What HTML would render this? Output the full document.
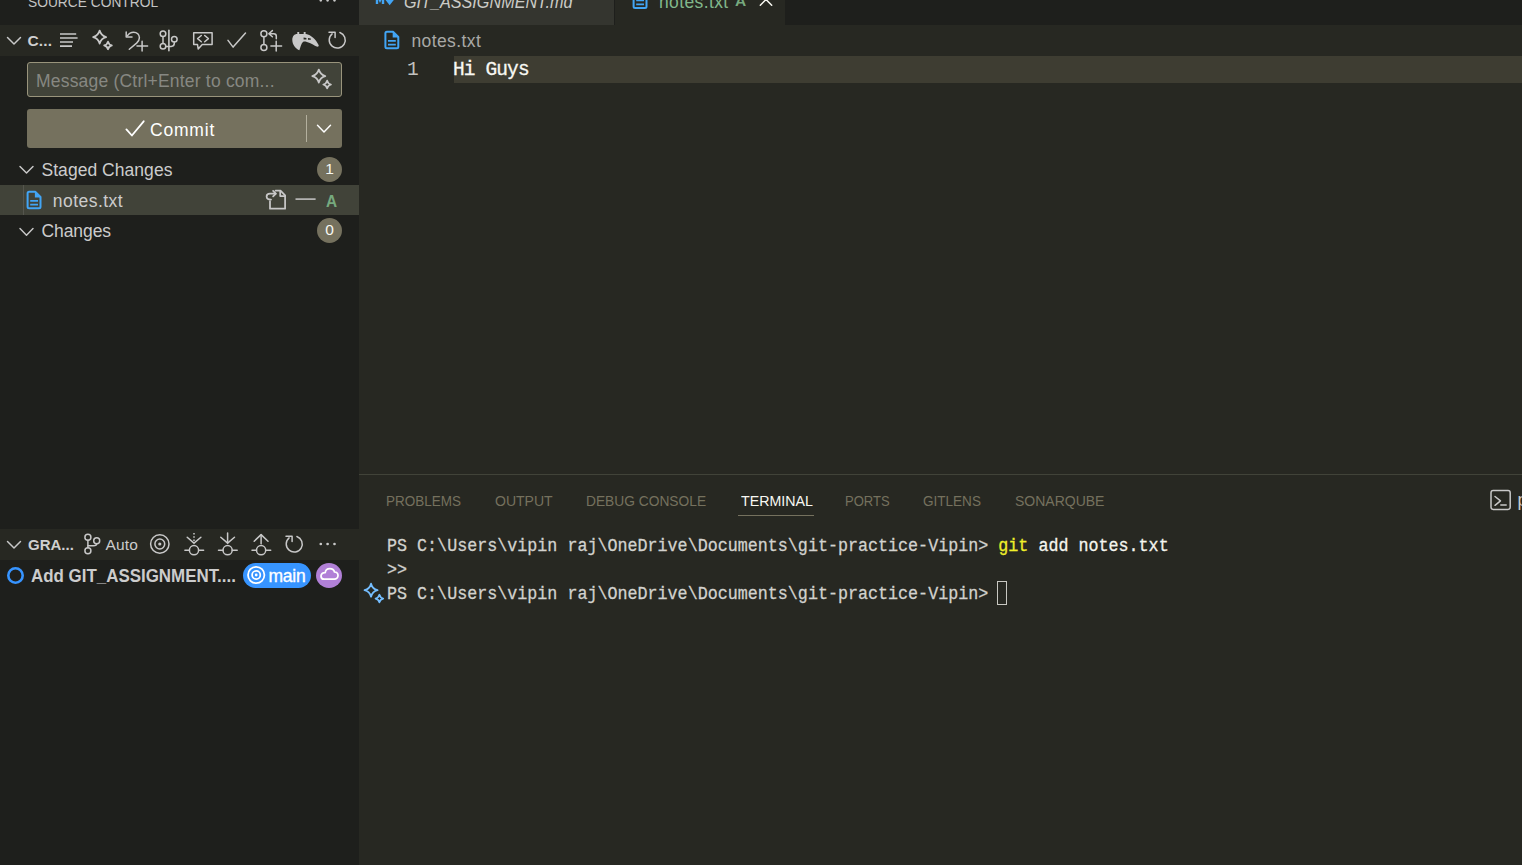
<!DOCTYPE html>
<html lang="en">
<head>
<meta charset="utf-8">
<title>notes.txt - git-practice-Vipin - Visual Studio Code</title>
<style>
*{box-sizing:border-box;margin:0;padding:0}
html,body{width:1522px;height:865px;overflow:hidden;background:#272822}
body{position:relative;font-family:"Liberation Sans",sans-serif;color:#cccccc;-webkit-font-smoothing:antialiased}
.abs{position:absolute}
.t{position:absolute;white-space:nowrap;line-height:1}

.mono{font-family:"Liberation Mono",monospace}
svg{position:absolute;overflow:visible}
.ic{fill:none;stroke:#c8c8c8;stroke-width:1.5;stroke-linecap:round;stroke-linejoin:round}
/* blocks */
#sidebar{left:0;top:0;width:359px;height:865px;background:#1e1f1c}
#hdr1{left:0;top:25px;width:359px;height:31px;background:#272822}
#hdr2{left:0;top:529px;width:359px;height:31px;background:#272822}
#msg{left:27px;top:62px;width:315px;height:35px;background:#414339;border:1px solid #99947c;border-radius:3px}
#commit{left:27px;top:109px;width:315px;height:39px;background:#75715e;border-radius:3px}
#commitsep{left:306px;top:115px;width:1px;height:27px;background:#c9c6b4;opacity:.75}
#selrow{left:0;top:185px;width:359px;height:30px;background:#414339}
#guide{left:23px;top:185px;width:1px;height:30px;background:#55564e}
.badge{width:25px;height:25px;border-radius:50%;background:#75715e}
#tabbar{left:359px;top:0;width:1163px;height:25px;background:#1e1f1c}
#tab1{left:359px;top:0;width:256px;height:25px;background:#34352f;border-right:1px solid #1e1f1c}
#tab2{left:615px;top:0;width:170px;height:25px;background:#272822}
#linehl{left:454px;top:56px;width:1068px;height:27px;background:#3e3d32}
#panelborder{left:359px;top:474px;width:1163px;height:1px;background:#414339}
#termul{left:737.5px;top:515px;width:76.5px;height:1px;background:#75715e}
#cursor{left:997px;top:581px;width:10px;height:24px;border:1px solid #c8c8c2}
#pill{left:243px;top:563px;width:68px;height:25px;border-radius:12.5px;background:#3794ff}
#cloudc{left:316px;top:563px;width:26px;height:25px;border-radius:50%;background:#b180d7}
</style>
</head>
<body>
<!-- ===== layout blocks ===== -->
<div class="abs" id="sidebar"></div>
<div class="abs" id="hdr1"></div>
<div class="abs" id="hdr2"></div>
<div class="abs" id="msg"></div>
<div class="abs" id="commit"></div>
<div class="abs" id="commitsep"></div>
<div class="abs" id="selrow"></div>
<div class="abs" id="guide"></div>
<div class="abs badge" style="left:317px;top:157px"></div>
<div class="abs badge" style="left:317px;top:218px"></div>
<div class="abs" id="pill"></div>
<div class="abs" id="cloudc"></div>
<div class="abs" id="tabbar"></div>
<div class="abs" id="tab1"></div>
<div class="abs" id="tab2"></div>
<div class="abs" id="linehl"></div>
<div class="abs" id="panelborder"></div>
<div class="abs" id="termul"></div>
<div class="abs" id="cursor"></div>
<!-- ===== TEXT ===== -->
<div class="t" id="t_sc" style="left:27.6px;top:-6.4px;font-size:15px;color:#c4c4c4;transform:scaleX(0.9179);transform-origin:0 0">SOURCE CONTROL</div>
<div class="t" id="t_c" style="left:27.5px;top:32.9px;font-size:15.5px;color:#d0d0d0;letter-spacing:0.17px;font-weight:bold">C...</div>
<div class="t" id="t_msg" style="left:36px;top:73.2px;font-size:17.5px;color:#878882;letter-spacing:0.2px">Message (Ctrl+Enter to com...</div>
<div class="t" id="t_commit" style="left:150px;top:122.2px;font-size:17.5px;color:#ffffff;letter-spacing:0.8px">Commit</div>
<div class="t" id="t_staged" style="left:41.5px;top:162.2px;font-size:17.5px;color:#cccccc;letter-spacing:0.04px">Staged Changes</div>
<div class="t" id="t_notes1" style="left:52.8px;top:193.2px;font-size:17.5px;color:#cccccc;letter-spacing:0.47px">notes.txt</div>
<div class="t" id="t_A1" style="left:326.3px;top:193.1px;font-size:16.5px;color:#76a97e;transform:scaleX(0.9333);transform-origin:0 0;font-weight:bold">A</div>
<div class="t" id="t_changes" style="left:41.5px;top:223.2px;font-size:17.5px;color:#cccccc;letter-spacing:-0.08px">Changes</div>
<div class="t" id="t_b1" style="left:317px;width:25px;text-align:center;top:161.4px;font-size:15.5px;color:#f8f8f2">1</div>
<div class="t" id="t_b0" style="left:317px;width:25px;text-align:center;top:222.4px;font-size:15.5px;color:#f8f8f2">0</div>
<div class="t" id="t_gra" style="left:27.5px;top:537.1px;font-size:15.5px;color:#d0d0d0;transform:scaleX(0.9674);transform-origin:0 0;font-weight:bold">GRA...</div>
<div class="t" id="t_auto" style="left:105.4px;top:536.9px;font-size:15.5px;color:#cccccc;letter-spacing:0.17px">Auto</div>
<div class="t" id="t_add" style="left:31.0px;top:568.2px;font-size:17.5px;color:#cccccc;transform:scaleX(0.9668);transform-origin:0 0;font-weight:bold">Add GIT_ASSIGNMENT....</div>
<div class="t" id="t_main" style="left:268.4px;top:567.7px;font-size:17.5px;color:#ffffff;letter-spacing:-0.2px;-webkit-text-stroke:0.35px #fff">main</div>
<div class="t" id="t_tab1" style="left:403.5px;top:-6.4px;font-size:17.5px;color:#ccccc7;transform:scaleX(0.925);transform-origin:0 0;font-style:italic">GIT_ASSIGNMENT.md</div>
<div class="t" id="t_tab2" style="left:659px;top:-6.4px;font-size:17.5px;color:#81b88b;letter-spacing:0.38px">notes.txt</div>
<div class="t" id="t_A2" style="left:735px;top:-6.6px;font-size:15.5px;color:#76a97e;font-weight:bold">A</div>
<div class="t" id="t_bc" style="left:411.5px;top:32.9px;font-size:17.5px;color:#a9a9a6;letter-spacing:0.39px">notes.txt</div>
<div class="t" id="t_p1" style="left:386.4px;top:492.7px;font-size:15.5px;color:#75715e;transform:scaleX(0.8706);transform-origin:0 0">PROBLEMS</div>
<div class="t" id="t_p2" style="left:494.6px;top:492.7px;font-size:15.5px;color:#75715e;transform:scaleX(0.9048);transform-origin:0 0">OUTPUT</div>
<div class="t" id="t_p3" style="left:586.1px;top:492.7px;font-size:15.5px;color:#75715e;transform:scaleX(0.8881);transform-origin:0 0">DEBUG CONSOLE</div>
<div class="t" id="t_p4" style="left:740.5px;top:492.7px;font-size:15.5px;color:#f8f8f2;transform:scaleX(0.9167);transform-origin:0 0">TERMINAL</div>
<div class="t" id="t_p5" style="left:844.9px;top:492.7px;font-size:15.5px;color:#75715e;transform:scaleX(0.8413);transform-origin:0 0">PORTS</div>
<div class="t" id="t_p6" style="left:922.9px;top:492.7px;font-size:15.5px;color:#75715e;transform:scaleX(0.8731);transform-origin:0 0">GITLENS</div>
<div class="t" id="t_p7" style="left:1014.6px;top:492.7px;font-size:15.5px;color:#75715e;transform:scaleX(0.9031);transform-origin:0 0">SONARQUBE</div>
<div class="t" id="t_ps" style="left:1517.5px;top:492.2px;font-size:17.5px;color:#cccccc">powershell</div>
<div class="t mono" id="t_ln" style="left:407.1px;top:61.1px;font-size:19.5px;color:#c2c2bf;transform:scaleX(1);transform-origin:0 0">1</div>
<div class="t mono" id="t_code" style="left:453px;top:61.1px;font-size:19.5px;color:#f8f8f2;letter-spacing:-0.88px;-webkit-text-stroke-width:0.3px">Hi Guys</div>
<div class="t mono" id="t_term1" style="left:386.9px;top:537.0px;font-size:19px;color:#d2d2ce;transform:scaleX(0.8789);transform-origin:0 0;-webkit-text-stroke-width:0.3px">PS C:\Users\vipin raj\OneDrive\Documents\git-practice-Vipin&gt; <span style="color:#f0f02a">git</span><span style="color:#f5f5ef"> add notes.txt</span></div>
<div class="t mono" id="t_term2" style="left:386.9px;top:561.0px;font-size:19px;color:#d2d2ce;transform:scaleX(0.8789);transform-origin:0 0;-webkit-text-stroke-width:0.3px">&gt;&gt;</div>
<div class="t mono" id="t_term3" style="left:386.9px;top:585.0px;font-size:19px;color:#d2d2ce;transform:scaleX(0.8789);transform-origin:0 0;-webkit-text-stroke-width:0.3px">PS C:\Users\vipin raj\OneDrive\Documents\git-practice-Vipin&gt;</div>
<!--TEXT-->
<!-- ===== ICONS ===== -->
<svg id="ov" width="1522" height="865" viewBox="0 0 1522 865" style="left:0;top:0">
<defs>
<g id="fileico"><path d="M2.5,1 H8.6 L13.9,6.3 V16.1 Q13.9,17.6 12.4,17.6 H2.5 Q1,17.6 1,16.1 V2.5 Q1,1 2.5,1 Z" fill="none" stroke="#42a5f5" stroke-width="2" stroke-linejoin="round"/><path d="M8.3,1 V6.9 H13.9 Z" fill="#42a5f5"/><path d="M3.6,10.1 H11.4 M3.6,13.9 H11.4" stroke="#42a5f5" stroke-width="1.7" fill="none"/></g>
<g id="chev"><polyline points="-6.5,-3.3 0,3.3 6.5,-3.3" fill="none" stroke-width="1.45" stroke-linecap="round" stroke-linejoin="round"/></g>
<g id="sparkle" fill="none" stroke-width="1.8" stroke-linejoin="round"><path d="M0,-6.5 Q1.35,-1.35 6.5,0 Q1.35,1.35 0,6.5 Q-1.35,1.35 -6.5,0 Q-1.35,-1.35 0,-6.5 Z"/><path d="M8.35,4.6000000000000005 Q9.15,7.6000000000000005 12.149999999999999,8.4 Q9.15,9.200000000000001 8.35,12.2 Q7.55,9.200000000000001 4.55,8.4 Q7.55,7.6000000000000005 8.35,4.6000000000000005 Z"/></g>
<g id="refresh" fill="none" stroke-width="1.5" stroke-linecap="round" stroke-linejoin="round"><path d="M2.6,-7.5 A8,8 0 1 1 -5.2,-6.1"/><path d="M-8.3,-7.8 H-2.2 V-2.4"/></g>
<g id="target"><circle r="9.2" fill="none" stroke-width="1.5"/><circle r="4.9" fill="none" stroke-width="1.5"/><circle r="1.6" fill="#c8c8c8" stroke="none"/></g>
</defs>
<g class="ic">
<!-- header 1 -->
<use href="#chev" x="14" y="40.7" stroke="#c8c8c8"/>
<path d="M60,34 H76.2 M60,38 H77.6 M60,42 H73 M60,46.1 H72" stroke-width="1.7" stroke-linecap="butt"/>
<use href="#sparkle" x="99.65" y="37.05" stroke="#c8c8c8"/>
<path d="M126.2,32 V37 H132"/><path d="M127.4,35.8 C129,33.3 131.3,32.2 133.6,32.2 C137,32.2 139.4,34.7 139.4,37.7 C139.4,40 138.2,41.6 136.6,43.1 L129.3,49.3"/><path d="M137,46 H147.6 M142.1,41.2 V51"/>
<circle cx="163" cy="33.7" r="2.8"/><circle cx="163" cy="46.3" r="2.8"/><circle cx="174.3" cy="39.3" r="2.8"/><path d="M163,36.5 V43.5"/><path d="M168.9,30.2 V50.8" stroke-width="1.6"/><path d="M174.3,42.1 V43.3 Q174.3,46.4 171.2,46.4 H165.8"/>
<path d="M193.7,32.8 H212.1 V44.6 H202.3 L198.2,48.9 L197.5,44.6 H193.7 Z"/><path d="M201.3,35.5 L197.6,38.6 L201.3,41.7 M204.7,35.5 L208.4,38.6 L204.7,41.7"/>
<path d="M228,40.4 L233.1,47.1 L245.5,33"/>
<circle cx="263.9" cy="33.7" r="3"/><circle cx="263.9" cy="47.4" r="3"/><path d="M263.9,36.7 V44.4"/><path d="M272.4,30.6 L268.8,33.7 L272.4,36.8 M269,33.7 H273.8 Q276.3,33.7 276.3,36.2 V38.7"/><path d="M270.9,46.1 H281.6 M276.2,41.2 V51"/>
<use href="#refresh" x="337.3" y="40"/>
<!-- ellipsis top -->
<g fill="#c8c8c8" stroke="none"><circle cx="320.8" cy="0.3" r="1.35"/><circle cx="327.6" cy="0.3" r="1.35"/><circle cx="334.5" cy="0.3" r="1.35"/></g>
<!-- input sparkle -->
<use href="#sparkle" x="318.8" y="76.1" stroke="#c8c8c8"/>
<!-- tree chevrons -->
<use href="#chev" x="26.5" y="169.8" stroke="#c8c8c8"/>
<use href="#chev" x="26.5" y="231.9" stroke="#c8c8c8"/>
<!-- go to file -->
<g stroke-width="1.75"><path d="M270,201.2 V208.7 H285.1 V195.4 L280.5,190.7 H275.6"/><path d="M280.2,190.9 V196 H285"/><path d="M271,199.6 C268,199.6 266.6,198 266.6,196.5 C266.6,194.6 268,193.7 270,193.7 H275.5"/><path d="M273.1,190.9 L275.9,193.7 L273.1,196.4"/>
</g>
<path d="M295.5,199.1 H315.6" stroke-linecap="butt" stroke-width="1.5"/>
<!-- graph header -->
<use href="#chev" x="14" y="544.8" stroke="#c8c8c8"/>
<circle cx="87.9" cy="537.2" r="3"/><circle cx="87.9" cy="550.7" r="3"/><circle cx="96.7" cy="540.8" r="3"/><path d="M87.9,540.2 V547.7"/><path d="M96.7,543.8 Q96.7,545.8 93.5,545.8 H88"/>
<use href="#target" x="159.8" y="544"/>
<g id="fetch"><circle cx="194" cy="550.2" r="4.6"/><path d="M184.9,550.2 H189.4 M198.6,550.2 H203.6"/><path d="M187.2,537.2 L194,543.1 L200.9,537.2"/><path d="M194,533 V543" stroke-dasharray="1.6 1.6" stroke-linecap="butt"/></g>
<g><circle cx="227.6" cy="550.2" r="4.6"/><path d="M218.5,550.2 H223 M232.2,550.2 H237.2"/><path d="M220.8,537.2 L227.6,543.1 L234.5,537.2"/><path d="M227.6,533 V543"/></g>
<g><circle cx="261.1" cy="550.2" r="4.6"/><path d="M252,550.2 H256.5 M265.7,550.2 H270.7"/><path d="M254.2,541.2 L261.1,534.6 L268,541.2"/><path d="M261.1,534.8 V543.8"/></g>
<use href="#refresh" x="294.3" y="544"/>
<g fill="#c8c8c8" stroke="none"><circle cx="320.8" cy="544" r="1.35"/><circle cx="327.6" cy="544" r="1.35"/><circle cx="334.5" cy="544" r="1.35"/></g>
<!-- terminal icon -->
<rect x="1491" y="490.5" width="19.2" height="18.9" rx="2.2"/><path d="M1495,496.5 L1500.5,500.9 L1495,505.3 M1500.8,505 H1506.2"/>
</g>
<!-- commit button -->
<g fill="none" stroke="#ffffff" stroke-width="1.8" stroke-linecap="round" stroke-linejoin="round"><path d="M126.4,129.4 L131.9,135.5 L143.7,121.3"/><use href="#chev" x="324" y="128.6" stroke="#ffffff"/></g>
<!-- anteater -->
<path d="M292.3,40 C292.3,36 294.5,34 297,34 L306,34 C311,35 316,39.5 318.6,45 C319.2,46.6 317.6,47.2 316,46.2 C312,43.8 307,41.2 304,41.4 C301.8,41.8 300.8,46 299.4,50.3 C296,49 292.3,45 292.3,40 Z" fill="#c8c8c8"/><path d="M297.3,32 h1.9 v3 h-1.9 Z M303.7,32 h1.9 v3 h-1.9 Z" fill="#c8c8c8"/><path d="M303.6,37.6 l2.8,0.5 v1.4 h-2.8 Z M308,38.1 l2.8,0.4 v1.2 h-2.8 Z" fill="#272822"/>
<!-- file icons -->
<use href="#fileico" x="26.6" y="190.7"/>
<use href="#fileico" x="384.4" y="30.7"/>
<use href="#fileico" x="632.6" y="-9.6"/>
<!-- md icon -->
<path d="M377,3.9 V-6 L380,0.3 L383,-6 V3.9" fill="none" stroke="#42a5f5" stroke-width="2.4"/><path d="M383.95,-2 H395.35 L389.65,5.3 Z" fill="#42a5f5"/>
<!-- tab close -->
<path d="M760.3,5.2 L766,-0.5 L771.7,5.2" fill="none" stroke="#f8f8f2" stroke-width="1.5" stroke-linecap="round"/>
<!-- graph commit circle, pill target, cloud -->
<circle cx="15.5" cy="575.5" r="7.2" fill="none" stroke="#3794ff" stroke-width="2.6"/>
<g fill="none" stroke="#ffffff" stroke-width="1.75"><circle cx="256.2" cy="575" r="8.2"/><circle cx="256.2" cy="575" r="4.1"/><circle cx="256.2" cy="575" r="1.4" fill="#ffffff" stroke="none"/>
<path d="M324.2,579.2 H334.3 C336.4,579.2 338,577.6 338,575.6 C338,573.6 336.5,572.1 334.5,572 C334,569.8 332,568.6 329.8,568.6 C327.4,568.6 325.5,570.3 325.2,572.6 C322.8,572.4 321,574 321,575.9 C321,577.8 322.4,579.2 324.2,579.2 Z" stroke-linejoin="round"/></g>
<!-- terminal sparkle -->
<use href="#sparkle" x="371.05" y="590.15" stroke="#75beff"/>
</svg>
<!--ICONS-->
</body>
</html>
